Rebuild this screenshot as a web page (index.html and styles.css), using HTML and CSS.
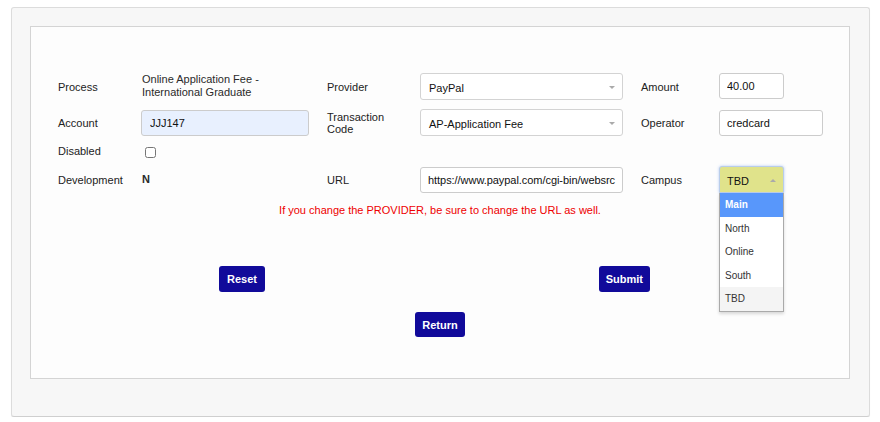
FILE: index.html
```html
<!DOCTYPE html>
<html lang="en">
<head>
<meta charset="UTF-8">
<meta name="viewport" content="width=device-width, initial-scale=1.0">
<title>Payment Provider</title>
<link rel="stylesheet" href="styles.css">
</head>
<body>
<div class="outer-panel">
  <div class="inner-panel">
    <div class="form-grid">
      <div class="label">Process</div>
      <div class="value wrap">Online Application Fee - International Graduate</div>
      <div class="label narrow">Provider</div>
      <div class="select wide"><span>PayPal</span><i class="caret"></i></div>
      <div class="label">Amount</div>
      <div><input class="text-input amount" type="text" value="40.00"></div>

      <div class="label">Account</div>
      <div><input class="text-input account" type="text" value="JJJ147"></div>
      <div class="label narrow">Transaction Code</div>
      <div class="select wide"><span>AP-Application Fee</span><i class="caret"></i></div>
      <div class="label">Operator</div>
      <div><input class="text-input operator" type="text" value="credcard"></div>

      <div class="label">Disabled</div>
      <div class="check-cell"><input type="checkbox" class="check"></div>

      <div class="label first">Development</div>
      <div class="value strong">N</div>
      <div class="label narrow">URL</div>
      <div><input class="text-input url" type="text" value="https://www.paypal.com/cgi-bin/websrc"></div>
      <div class="label">Campus</div>
      <div class="dropdown">
        <div class="select campus"><span>TBD</span><i class="caret up"></i></div>
        <ul class="dropdown-list">
          <li class="highlight">Main</li>
          <li>North</li>
          <li>Online</li>
          <li>South</li>
          <li class="selected">TBD</li>
        </ul>
      </div>
    </div>

    <p class="warning">If you change the PROVIDER, be sure to change the URL as well.</p>

    <div class="button-row">
      <button class="btn reset">Reset</button>
      <button class="btn">Submit</button>
    </div>
    <div class="return-row">
      <button class="btn return">Return</button>
    </div>
  </div>
</div>
</body>
</html>
```

FILE: styles.css
```css
body {
  margin: 0;
  background: #ffffff;
  font-family: 'Liberation Sans', Arial, sans-serif;
  font-size: 11px;
  color: #333;
}
.outer-panel {
  margin: 7px 10px 0 11px;
  padding: 18px 19px 37px 18px;
  background: #f7f7f7;
  border: 1px solid #dcdcdc;
  border-bottom-color: #cfcfcf;
  border-radius: 3px;
  box-shadow: 0 1px 1px rgba(0,0,0,0.06);
}
.inner-panel {
  height: 353px;
  box-sizing: border-box;
  background: #fdfdfd;
  border: 1px solid #d4d4d4;
  padding-top: 46px;
}
.form-grid {
  display: grid;
  grid-template-columns: 84px 185px 93px 221px 78px 1fr;
  grid-template-rows: 27px 27px 12px 27px;
  row-gap: 9px;
  align-items: center;
  padding-left: 27px;
}
.label {
  color: #222;
  line-height: 12px;
}
.label.narrow {
  max-width: 70px;
}
.label.first {
  grid-column-start: 1;
}
.value {
  color: #2a2a2a;
  line-height: 13px;
}
.value.wrap {
  max-width: 150px;
  margin-top: -2px;
}
.value.strong {
  font-weight: bold;
}
.text-input {
  display: block;
  box-sizing: border-box;
  height: 26px;
  padding: 0 7px;
  border: 1px solid #cccccc;
  border-radius: 3px;
  background: #fff;
  font-family: inherit;
  font-size: 11px;
  color: #111;
  outline: none;
}
.amount {
  width: 65px;
  margin-top: -2px;
}
.account {
  width: 168px;
  margin-left: -1px;
  background: #e8f0fe;
  padding-left: 8px;
}
.operator {
  width: 104px;
}
.url {
  width: 203px;
  padding-right: 0;
  letter-spacing: -0.05px;
}
.check-cell {
  display: flex;
  align-items: center;
}
.check {
  width: 11px;
  height: 11px;
  margin: 2px 0 0 3px;
}
.select {
  position: relative;
  box-sizing: border-box;
  height: 27px;
  display: flex;
  align-items: center;
  padding: 2px 8px 0;
  border: 1px solid #d3d3d3;
  border-radius: 3px;
  background: #fff;
  color: #111;
}
.select.wide {
  width: 203px;
}
.caret {
  position: absolute;
  right: 7px;
  top: 12px;
  width: 0;
  height: 0;
  border-left: 3px solid transparent;
  border-right: 3px solid transparent;
  border-top: 3px solid #aaa;
}
.caret.up {
  border-top: none;
  border-bottom: 3px solid #aaa;
}
.dropdown {
  position: relative;
  width: 65px;
}
.select.campus {
  width: 65px;
  background: #e0e38b;
  border-color: #b9cdea;
  border-radius: 3px 3px 0 0;
  box-shadow: 0 0 3px rgba(120,160,240,0.55);
  padding-left: 7px;
  font-size: 11px;
}
.dropdown-list {
  position: absolute;
  left: 0;
  top: 100%;
  width: 65px;
  box-sizing: border-box;
  margin: 0;
  padding: 0;
  list-style: none;
  background: #fff;
  border: 1px solid #aaaaaa;
  border-top: none;
  box-shadow: 0 2px 3px rgba(0,0,0,0.15);
  font-size: 10px;
  color: #333;
  z-index: 2;
}
.dropdown-list li {
  height: 23.6px;
  line-height: 23.6px;
  padding-left: 5px;
}
.dropdown-list li.highlight {
  background: #5897fb;
  color: #fff;
  font-weight: bold;
}
.dropdown-list li.selected {
  background: #f4f4f4;
}
.warning {
  margin: 10px 0 0;
  text-align: center;
  line-height: 14px;
  color: #ee0000;
}
.button-row {
  display: flex;
  justify-content: space-between;
  margin-top: 49px;
  padding: 0 199px 0 188px;
}
.return-row {
  display: flex;
  justify-content: center;
  margin-top: 20px;
}
.btn {
  height: 26px;
  padding: 0 7px;
  border: none;
  border-radius: 3px;
  background: #110a9a;
  color: #fff;
  font-family: inherit;
  font-size: 11px;
  font-weight: bold;
  cursor: pointer;
}
.btn.reset {
  padding: 0 8px;
}
.btn.return {
  height: 25px;
}
```
